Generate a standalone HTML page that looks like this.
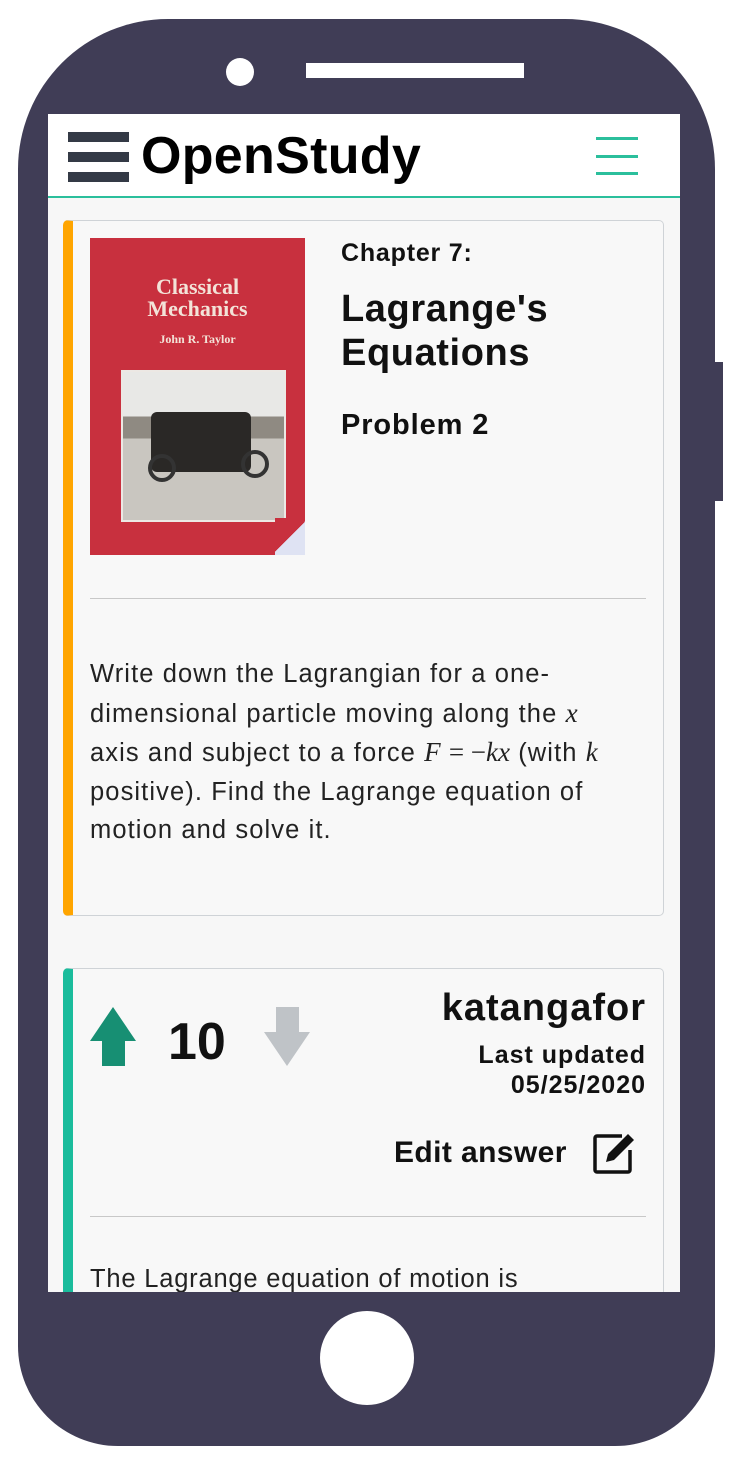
<!DOCTYPE html>
<html><head><meta charset="utf-8"><style>
*{margin:0;padding:0;box-sizing:border-box}
body{width:740px;height:1463px;background:#fff;position:relative;overflow:hidden;font-family:"Liberation Sans",sans-serif;color:#111}
.a{position:absolute}
.m{font-family:'Liberation Serif',serif;font-size:27px;letter-spacing:0}
</style></head><body>
<div class="a" style="left:714px;top:362px;width:9px;height:139px;background:#403d56"></div>
<div class="a" style="left:18px;top:19px;width:697px;height:1427px;background:#403d56;border-radius:150px 150px 100px 100px"></div>
<div class="a" style="left:226px;top:58px;width:28px;height:28px;border-radius:50%;background:#fff"></div>
<div class="a" style="left:306px;top:63px;width:218px;height:15px;background:#fff"></div>
<div class="a" style="left:320px;top:1311px;width:94px;height:94px;border-radius:50%;background:#fff"></div>
<div class="a" style="left:48px;top:114px;width:632px;height:1178px;background:#f7f7f7;overflow:hidden">
  <div class="a" style="left:0;top:0;width:632px;height:84px;background:#fff;border-bottom:2px solid #2bbf9c"></div>
  <div class="a" style="left:20px;top:18px;width:61px;height:10px;background:#343a46"></div>
  <div class="a" style="left:20px;top:38px;width:61px;height:10px;background:#343a46"></div>
  <div class="a" style="left:20px;top:58px;width:61px;height:10px;background:#343a46"></div>
  <div class="a" style="left:93px;top:12px;font-size:52px;font-weight:bold;letter-spacing:0.3px;color:#000">OpenStudy</div>
  <div class="a" style="left:548px;top:23px;width:42px;height:3px;background:#2bbf9c"></div>
  <div class="a" style="left:548px;top:41px;width:42px;height:3px;background:#2bbf9c"></div>
  <div class="a" style="left:548px;top:58px;width:42px;height:3px;background:#2bbf9c"></div>

  <div class="a" style="left:15px;top:106px;width:601px;height:696px;border:1px solid #cfd3d7;border-left:10px solid #ffa500;border-radius:5px;background:#f8f8f8"></div>
  <div class="a" style="left:42px;top:124px;width:215px;height:317px;background:#c8303e">
    <div class="a" style="left:0;top:38px;width:215px;text-align:center;color:#f3e3d8;font-family:'Liberation Serif',serif;font-size:22px;line-height:22px;font-weight:bold">Classical<br>Mechanics</div>
    <div class="a" style="left:0;top:94px;width:215px;text-align:center;color:#f3e3d8;font-family:'Liberation Serif',serif;font-size:12px;font-weight:bold">John R. Taylor</div>
    <div class="a" style="left:31px;top:132px;width:165px;height:152px;background:linear-gradient(#e8e8e6 0 30%,#8f8a82 30% 45%,#c9c6c0 45%);border:2px solid #ece8e4">
      <div class="a" style="left:28px;top:40px;width:100px;height:60px;background:#2a2826;border-radius:6px"></div>
      <div class="a" style="left:25px;top:82px;width:28px;height:28px;border:4px solid #333;border-radius:50%"></div>
      <div class="a" style="left:118px;top:78px;width:28px;height:28px;border:4px solid #333;border-radius:50%"></div>
    </div>
    <div class="a" style="left:185px;top:280px;width:30px;height:37px;background:linear-gradient(135deg,#c8303e 50%,#dfe3f3 50%)"></div>
  </div>
  <div class="a" style="left:293px;top:125px;font-size:25px;font-weight:bold;letter-spacing:0.8px">Chapter 7:</div>
  <div class="a" style="left:293px;top:173px;font-size:38px;font-weight:bold;line-height:44px;letter-spacing:0.6px">Lagrange's<br>Equations</div>
  <div class="a" style="left:293px;top:295px;font-size:29px;font-weight:bold;letter-spacing:0.9px">Problem 2</div>
  <div class="a" style="left:42px;top:484px;width:556px;height:1px;background:#c8c8c8"></div>
  <div class="a" style="left:42px;top:541px;width:530px;font-size:25.5px;line-height:38.5px;color:#222;letter-spacing:1.1px">Write down the Lagrangian for a one-dimensional particle moving along the <i class="m">x</i> axis and subject to a force <i class="m">F</i> <span class="m">= −</span><i class="m">kx</i> (with <i class="m">k</i> positive). Find the Lagrange equation of motion and solve it.</div>

  <div class="a" style="left:15px;top:854px;width:601px;height:400px;border:1px solid #cfd3d7;border-left:10px solid #1abc9c;border-radius:5px;background:#f8f8f8"></div>
  <svg class="a" style="left:42px;top:893px" width="46" height="60"><path d="M23 0L46 34H35V59H12V34H0Z" fill="#178f73"/></svg>
  <div class="a" style="left:120px;top:898px;font-size:52px;font-weight:bold">10</div>
  <svg class="a" style="left:216px;top:893px" width="46" height="60"><path d="M12 0H35V25H46L23 59L0 25H12Z" fill="#bfc3c7"/></svg>
  <div class="a" style="right:34px;top:873px;font-size:38px;font-weight:bold;letter-spacing:1px">katangafor</div>
  <div class="a" style="right:34px;top:926px;font-size:25px;font-weight:bold;text-align:right;line-height:30px;letter-spacing:1px">Last updated<br>05/25/2020</div>
  <div class="a" style="left:346px;top:1022px;font-size:30px;font-weight:bold;letter-spacing:0.4px">Edit answer</div>
  <svg class="a" style="left:544px;top:1016px" width="46" height="46" viewBox="0 0 46 46"><path d="M30 6H5a2 2 0 0 0-2 2V40a2 2 0 0 0 2 2H36a2 2 0 0 0 2-2V20" fill="none" stroke="#111" stroke-width="3.5"/><path d="M14 32L16 24L36 4L42 10L22 30Z" fill="#111"/></svg>
  <div class="a" style="left:42px;top:1152px;width:556px;height:1px;background:#c8c8c8;top:1102px"></div>
  <div class="a" style="left:42px;top:1151px;font-size:25.5px;color:#222;letter-spacing:0.8px">The Lagrange equation of motion is</div>
</div>
</body></html>
